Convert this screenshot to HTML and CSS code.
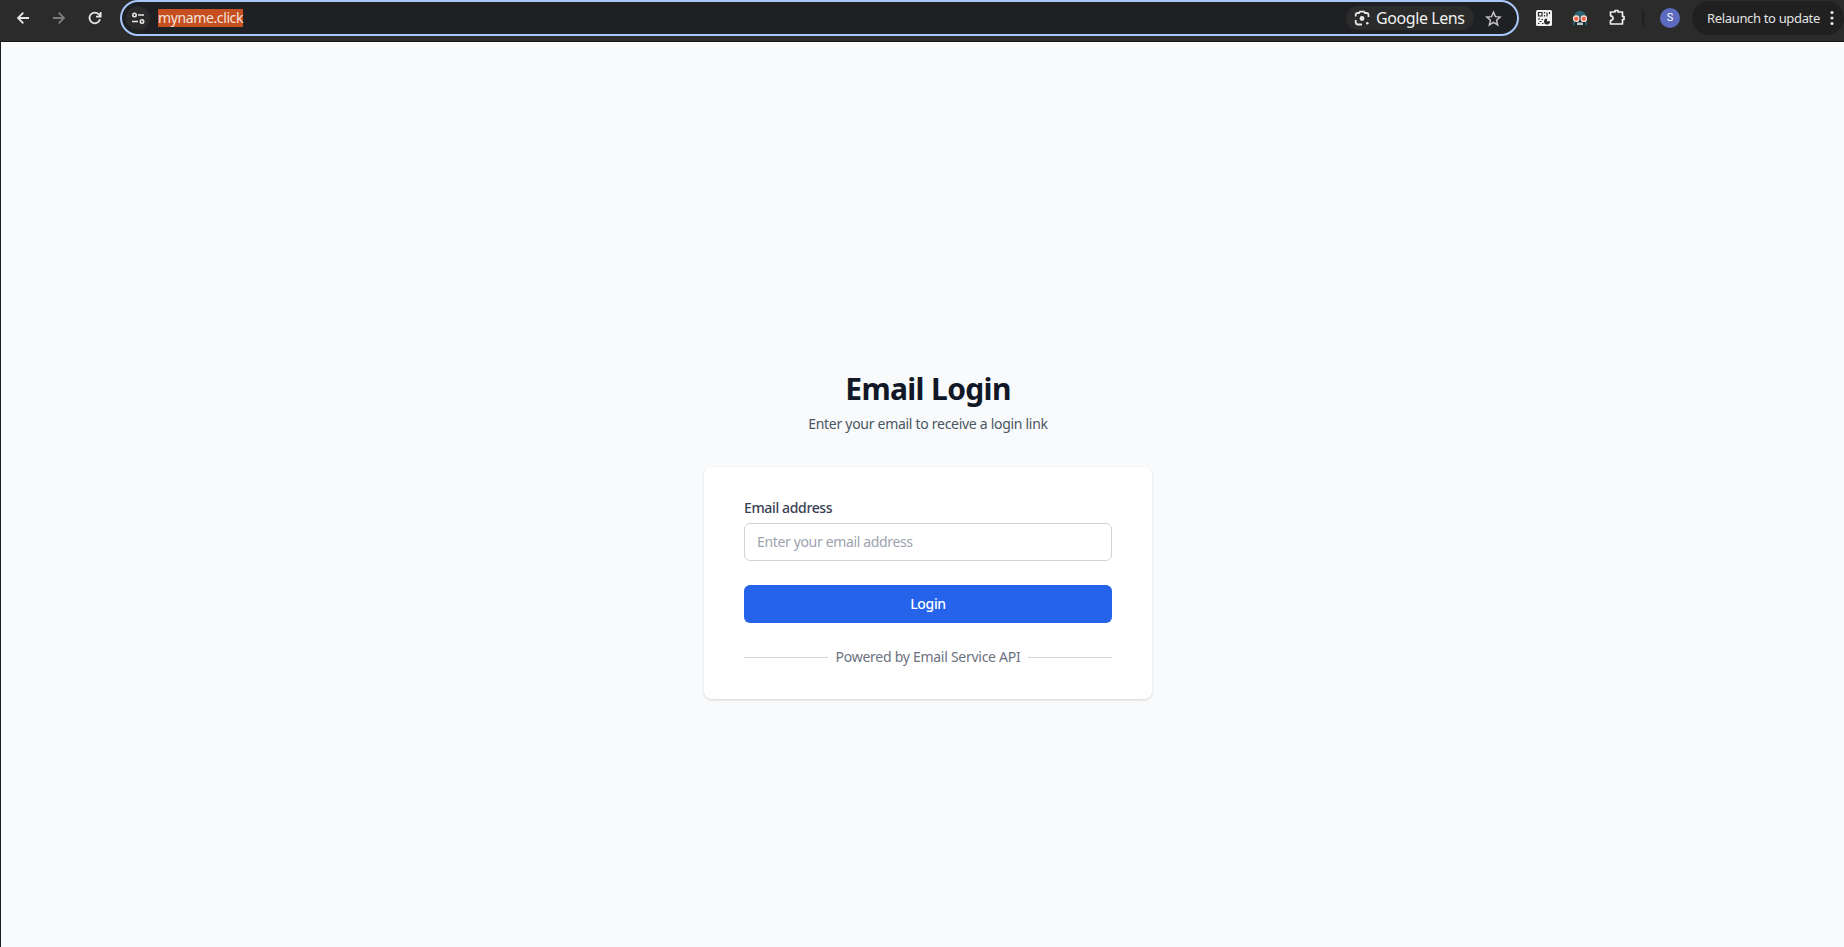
FILE: index.html
```html
<!DOCTYPE html>
<html lang="en">
<head>
<meta charset="utf-8">
<title>Email Login</title>
<link rel="stylesheet" href="styles.css">
</head>
<body>
<header class="toolbar">
  <nav class="nav">
    <svg class="icon" viewBox="0 0 24 24"><path d="M21 12H5M12.500 4 4.500 12l8 8"/></svg>
    <svg class="icon dim" viewBox="0 0 24 24"><path d="M3 12h16M11.500 4l8 8-8 8"/></svg>
    <svg class="icon" viewBox="0 0 24 24"><path d="M19.500 14A8 8 0 1 1 17.500 6.300L20.500 9.500M20.500 3v7h-7"/></svg>
  </nav>
  <div class="address">
    <span class="site"><svg class="tune" viewBox="0 0 14 14"><circle cx="3.500" cy="4" r="1.700"/><path d="M7 4h6M1 10.500h6"/><circle cx="11" cy="10.500" r="1.700"/></svg></span>
    <span class="url">myname.click</span>
    <span class="lens"><svg class="lens-icon" viewBox="0 0 16 16"><path d="M1.700 6.500V5Q1.700 3 3.700 3H5l1-1.300h4L11 3h1.500q2 0 2 2v2M1.700 10v2q0 2.500 2.500 2.500H8"/><circle cx="8" cy="8.500" r="2.400" class="solid"/><circle cx="13.300" cy="13.200" r="1.300" class="solid"/></svg><span>Google Lens</span></span>
    <svg class="star" viewBox="0 0 24 24"><path d="m12 3 2.700 6.300 6.800.6-5.200 4.500 1.600 6.700L12 17.500l-5.900 3.600 1.600-6.700L2.500 9.900l6.800-.6z"/></svg>
  </div>
  <div class="extensions">
    <svg class="qr" viewBox="0 0 16 16"><rect width="16" height="16" rx="1.500" fill="#f1f1f1"/><path d="M2.500 2.500h3.500v3.500H2.500zM8.500 2v1.500M8.500 5v1.500M11 2.500v4M13.500 2v2M2 9h2M5.500 9.500h1.500M3.500 11.500h2M2 13.500h1.500M6 13.500h1.500" fill="none" stroke="#2b2b2b" stroke-width="1.200"/><path d="M11 8.500v2.700h3a3 3 0 1 1-3-2.700z" fill="#2b2b2b"/></svg>
    <svg class="agent" viewBox="0 0 16 16"><path d="M2 7C2.500 3 5 .8 8 .8S13.500 3 14 7z" fill="#2d6475"/><path d="M2.500 8h11l1 7h-13z" fill="#142733"/><path d="M1 11h2v4H1zM13 11h2v4h-2z" fill="#27586a"/><path d="M5 12.500h6V15H5z" fill="#b9c6cb"/><circle cx="4.200" cy="8.700" r="2.700" fill="#ef6246" stroke="#f4d8d0" stroke-width="1.300"/><circle cx="11.800" cy="8.700" r="2.700" fill="#ef6246" stroke="#f4d8d0" stroke-width="1.300"/></svg>
    <svg class="puzzle" viewBox="0 0 18 18"><path d="M2.500 4H7V2.500h3V4h4.500v4.500H16v3h-1.500V16h-12v-3.500q2.500 0 2.500-2.300T2.500 7.800z"/></svg>
  </div>
  <span class="separator"></span>
  <span class="avatar">S</span>
  <div class="update"><span>Relaunch to update</span><svg class="dots" viewBox="0 0 4 16"><circle cx="2" cy="2.500" r="1.600"/><circle cx="2" cy="8" r="1.600"/><circle cx="2" cy="13.500" r="1.600"/></svg></div>
</header>
<main class="page">
  <h1 class="title">Email Login</h1>
  <p class="subtitle">Enter your email to receive a login link</p>
  <form class="card">
    <label class="label" for="email">Email address</label>
    <input class="input" id="email" type="email" placeholder="Enter your email address">
    <button class="button" type="button">Login</button>
    <div class="divider">Powered by Email Service API</div>
  </form>
</main>
</body>
</html>
```
FILE: styles.css
```css
* { box-sizing: border-box; }
body {
  margin: 0;
  height: 947px;
  overflow: hidden;
  display: flex;
  flex-direction: column;
  background: #f9fafb;
  font-family: "Noto Sans", sans-serif;
  font-size: 14px;
}
svg { display: block; flex: none; }
.toolbar {
  height: 42px;
  flex: none;
  display: flex;
  align-items: flex-start;
  background: #2b2b2b;
  border-bottom: 1px solid #161616;
  white-space: nowrap;
}
.nav { display: flex; gap: 20px; padding: 10px 0 0 15px; width: 120px; }
.icon { width: 16px; height: 16px; fill: none; stroke: #e6e6e6; stroke-width: 2.700; }
.dim { stroke: #7d7d7d; }
.address {
  width: 1399px;
  height: 36px;
  display: flex;
  align-items: center;
  padding: 0 15px 0 4px;
  background: #1f2023;
  border: 2px solid #a8c7fa;
  border-radius: 18px;
}
.site { width: 24px; height: 24px; border-radius: 50%; background: #2b2b2b; display: grid; place-items: center; }
.tune { width: 14px; height: 14px; fill: none; stroke: #e6e6e6; stroke-width: 1.600; }
.url { margin-left: 8px; height: 18px; line-height: 18px; background: #c64f21; color: #f3e4dc; letter-spacing: -.38px; }
.lens { margin-left: auto; width: 128px; height: 24px; padding-left: 8px; border-radius: 12px; background: #2b2b2b; display: flex; align-items: center; gap: 6px; color: #f0f0f0; font-size: 16px; letter-spacing: -.42px; }
.lens-icon { width: 16px; height: 16px; fill: none; stroke: #e6e6e6; stroke-width: 1.800; }
.lens-icon .solid { fill: #e6e6e6; stroke: none; }
.star { width: 17px; height: 17px; margin-left: 11px; fill: none; stroke: #c7c7c7; stroke-width: 2; }
.extensions { display: flex; gap: 20px; padding: 10px 0 0 17px; width: 123px; }
.qr, .agent { width: 16px; height: 16px; }
.puzzle { width: 18px; height: 18px; margin-top: -2px; fill: none; stroke: #eee; stroke-width: 1.700; stroke-linejoin: round; }
.separator { width: 2px; height: 16px; margin-top: 10px; background: #202020; }
.avatar { width: 20px; height: 20px; margin: 8px 0 0 16px; border-radius: 50%; background: #5c6bc0; color: #fff; font: 11px/20px Roboto, sans-serif; text-align: center; }
.update { flex: 1; height: 34px; margin: 1px 0 0 12px; padding: 0 10px 0 15px; border-radius: 17px; background: #202020; display: flex; align-items: center; justify-content: space-between; color: #e3e3e3; font-size: 13px; letter-spacing: -.34px; }
.dots { width: 4px; height: 16px; fill: #e6e6e6; }
.page {
  flex: 1;
  display: flex;
  flex-direction: column;
  align-items: center;
  padding: 329px 0 0 11px;
  border-left: 1px solid #1c1c1c;
}
.title { margin: 0; line-height: 36px; font-size: 30px; font-weight: 700; color: #111827; letter-spacing: -.65px; }
.subtitle { margin: 8px 0 32px; line-height: 18px; padding-bottom: 2px; color: #4b5563; letter-spacing: -.29px; }
.card { width: 448px; height: 232px; padding: 32px 40px; display: flex; flex-direction: column; border-radius: 8px; background: #fff; box-shadow: 0 1px 3px rgba(0,0,0,.1), 0 1px 2px rgba(0,0,0,.06); }
.label { line-height: 18px; padding-bottom: 2px; font-weight: 500; color: #374151; letter-spacing: -.36px; }
.input { height: 38px; margin: 4px 0 24px; padding: 0 12px 2px; border: 1px solid #d1d5db; border-radius: 6px; background: #fff; font: inherit; letter-spacing: -.35px; }
.input::placeholder { color: #9ca3af; opacity: 1; }
.button { height: 38px; padding: 0 0 2px; border: 0; border-radius: 6px; background: #2563eb; color: #fff; font: inherit; font-weight: 500; letter-spacing: -.35px; }
.divider { margin-top: 24px; display: flex; align-items: center; gap: 8px; line-height: 20px; color: #6b7280; white-space: nowrap; letter-spacing: -.27px; }
.divider::before, .divider::after { content: ""; flex: 1; height: 1px; background: #d1d5db; }
```
